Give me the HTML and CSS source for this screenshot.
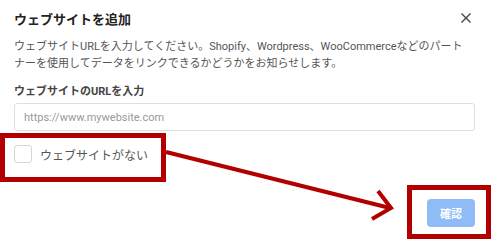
FILE: index.html
```html
<!DOCTYPE html>
<html lang="ja">
<head>
    <meta charset="UTF-8">
    <title>ウェブサイトを追加</title>
    <link rel="stylesheet" href="styles.css">
</head>
<body>
    <div class="dialog">
        <div class="header">
            <span class="title">ウェブサイトを追加</span>
            <svg class="close" width="12" height="12" viewBox="0 0 12 12"><path d="M1.5 1.5L10.5 10.5M10.5 1.5L1.5 10.5" stroke="#444" stroke-width="1.4"/></svg>
        </div>
        <p class="desc">ウェブサイトURLを入力してください。Shopify、Wordpress、WooCommerceなどのパートナーを使用してデータをリンクできるかどうかをお知らせします。</p>
        <label class="label">ウェブサイトのURLを入力</label>
        <input type="text" class="url" placeholder="https://www.mywebsite.com">
        <div class="check-row">
            <span class="box"></span>
            <span>ウェブサイトがない</span>
        </div>
        <div class="footer">
            <button class="ok">確認</button>
        </div>
    </div>
    <svg class="marks" width="491" height="239" viewBox="0 0 491 239">
        <rect x="2.5" y="135.5" width="161" height="44" fill="none" stroke="#b20000" stroke-width="5"/>
        <rect x="409.5" y="187.5" width="79" height="49" fill="none" stroke="#b20000" stroke-width="5"/>
        <line x1="166" y1="152" x2="390" y2="208" stroke="#b20000" stroke-width="4"/>
        <polyline points="378,191 391,208 372,219" fill="none" stroke="#b20000" stroke-width="4"/>
    </svg>
</body>
</html>
```
FILE: styles.css
```css
body {
    margin: 0;
    background: #fff;
    font-family: Roboto, "Noto Sans CJK JP", sans-serif;
    color: #333;
    width: 491px;
    height: 239px;
    overflow: hidden;
    position: relative;
}
.dialog {
    padding: 0 16px 0 14px;
}
.header {
    display: flex;
    justify-content: space-between;
    align-items: center;
    height: 36px;
}
.title {
    font-size: 13px;
    font-weight: bold;
    color: #222;
}
.close {
    margin-right: 3px;
}
.desc {
    margin: 2px 0 0;
    font-size: 11px;
    line-height: 17px;
    color: #555;
    padding-right: 4px;
}
.label {
    display: block;
    margin-top: 10px;
    font-size: 11px;
    font-weight: bold;
    color: #444;
}
.url {
    display: block;
    box-sizing: border-box;
    width: 100%;
    height: 28px;
    margin-top: 5px;
    padding: 0 9px;
    border: 1px solid #e0e0e0;
    border-radius: 3px;
    font-family: Roboto, sans-serif;
    font-size: 11px;
}
.url::placeholder {
    color: #999;
}
.check-row {
    display: flex;
    align-items: center;
    gap: 8px;
    margin-top: 14px;
    font-size: 12px;
    color: #555;
}
.box {
    width: 16px;
    height: 16px;
    border: 1px solid #d6d6d6;
    border-radius: 3px;
}
.footer {
    display: flex;
    justify-content: flex-end;
    margin-top: 36px;
}
.ok {
    width: 48px;
    height: 28px;
    border: none;
    border-radius: 4px;
    background: #8fbcf7;
    color: #fff;
    font-weight: bold;
    font-size: 11px;
    font-family: "Noto Sans CJK JP", sans-serif;
}
.marks {
    position: absolute;
    left: 0;
    top: 0;
}
```
